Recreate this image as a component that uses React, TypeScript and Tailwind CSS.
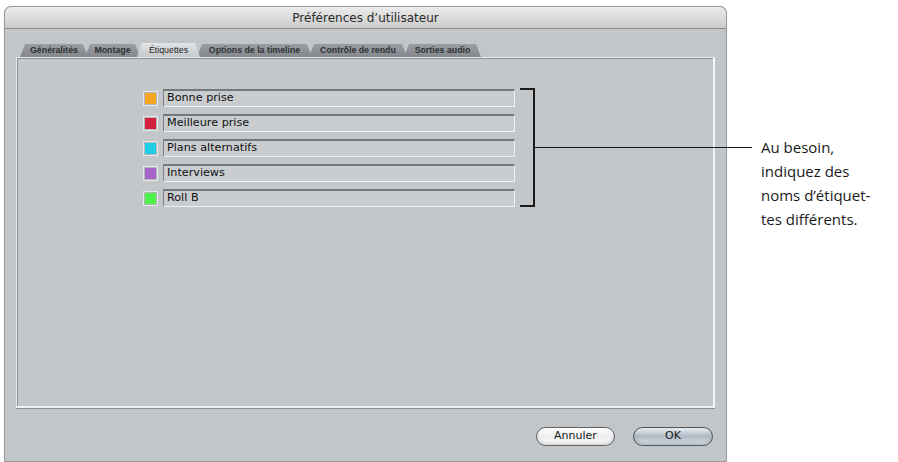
import React from "react";

const tabs = [
  { label: "Généralités", w: 68 },
  { label: "Montage", w: 55 },
  { label: "Étiquettes", w: 63, active: true },
  { label: "Options de la timeline", w: 115 },
  { label: "Contrôle de rendu", w: 98 },
  { label: "Sorties audio", w: 77 },
];

const rows = [
  { color: "bg-[#f5a623]", text: "Bonne prise" },
  { color: "bg-[#d4213d]", text: "Meilleure prise" },
  { color: "bg-[#1fcde6]", text: "Plans alternatifs" },
  { color: "bg-[#a865c9]", text: "Interviews" },
  { color: "bg-[#4df24b]", text: "Roll B" },
];

export default function App() {
  return (
    <div className="relative w-[898px] h-[462px] bg-white overflow-hidden">
      <div className="flex pl-[4px] pt-[6px]">
        {/* Window */}
        <div className="w-[723px] h-[456px] flex flex-col rounded-t-[7px] border border-[#9a9a9a] bg-[#c3c6c9] shadow-[0_0_1px_rgba(0,0,0,0.2)]">
          {/* Title bar */}
          <div className="h-[22px] shrink-0 flex items-center justify-center rounded-t-[7px] bg-gradient-to-b from-[#ececec] to-[#cbcbcb] border-b border-[#8c8c8c] font-['DejaVu_Sans',sans-serif] text-[12px] text-[#2a2a2a]">
            Préférences d’utilisateur
          </div>
          {/* Body */}
          <div className="flex flex-col flex-1 px-[11px] pt-[15px]">
            {/* Tabs */}
            <div className="flex h-[13px] pl-[4px] items-end">
              {tabs.map((t, i) => (
                <div
                  key={t.label}
                  style={{ width: t.w, zIndex: t.active ? 10 : 10 - i }}
                  className={
                    "relative -mr-[3px] h-[13px] flex items-center justify-center font-['Liberation_Sans',sans-serif] font-bold text-[8.8px] leading-none [clip-path:polygon(5px_0,calc(100%-5px)_0,100%_100%,0_100%)] " +
                    (t.active
                      ? "bg-gradient-to-b from-[#e2e4e6] to-[#c6c9cc] text-[#1f1f1f] font-normal h-[14px]"
                      : "bg-gradient-to-b from-[#9a9ea2] to-[#84888c] text-[#2f3133]")
                  }
                >
                  {t.label}
                </div>
              ))}
            </div>
            {/* Panel */}
            <div className="h-[351px] border-l border-t border-[#e8eaec] border-r-2 border-r-[#f4f5f6] border-b-2 border-b-[#f0f1f2] shadow-[inset_1px_1px_0_#8d9094,0_1px_0_#8a8d90] bg-[#c4c7ca] pt-[31px] pl-[126px]">
              <div className="flex flex-col gap-[7px]">
                {rows.map((r) => (
                  <div key={r.text} className="flex items-center h-[18px] gap-[5px]">
                    <div className="w-[15px] h-[15px] border border-[#e6e8ea] p-[1px] bg-[#b5b8bb]">
                      <div className={"w-full h-full " + r.color} />
                    </div>
                    <div className="w-[352px] h-[18px] flex items-center pl-[3px] bg-[#cacdd0] border-t-2 border-t-[#76797c] border-l border-l-[#808386] border-b border-b-[#eef0f1] border-r border-r-[#eef0f1] font-['DejaVu_Sans',sans-serif] text-[11.2px] text-[#111111]">
                      {r.text}
                    </div>
                  </div>
                ))}
              </div>
            </div>
            {/* Buttons */}
            <div className="flex justify-end gap-[18px] pr-[2px] mt-[19px]">
              <div className="w-[79px] h-[19px] rounded-full border border-[#5e6266] bg-gradient-to-b from-[#ffffff] via-[#eceef0] to-[#fbfbfb] shadow-[inset_0_-2px_3px_rgba(150,150,150,0.35)] flex items-center justify-center font-['DejaVu_Sans',sans-serif] text-[11px] text-[#1a1a1a]">
                Annuler
              </div>
              <div className="w-[80px] h-[19px] rounded-full border border-[#4d5359] bg-gradient-to-b from-[#e8edf2] via-[#aeb9c3] to-[#dfe6ec] shadow-[inset_0_-2px_3px_rgba(120,130,140,0.4)] flex items-center justify-center font-['DejaVu_Sans',sans-serif] text-[11px] text-[#1a1a1a]">
                OK
              </div>
            </div>
          </div>
        </div>
        {/* Annotation */}
        <div className="ml-[34px] mt-[129px] font-['Open_Sans',sans-serif] text-[15px] leading-[24px] text-[#1a1a1a]">
          <div>Au besoin,</div>
          <div>indiquez des</div>
          <div>noms d’étiquet-</div>
          <div>tes différents.</div>
        </div>
      </div>
      {/* Bracket and leader line (overlay) */}
      <div className="absolute left-[520px] top-[88px] w-[15px] h-[119px] border-t-2 border-b-2 border-r-2 border-[#1a1a1a]" />
      <div className="absolute left-[535px] top-[147px] w-[217px] h-[1px] bg-[#1a1a1a]" />
    </div>
  );
}
